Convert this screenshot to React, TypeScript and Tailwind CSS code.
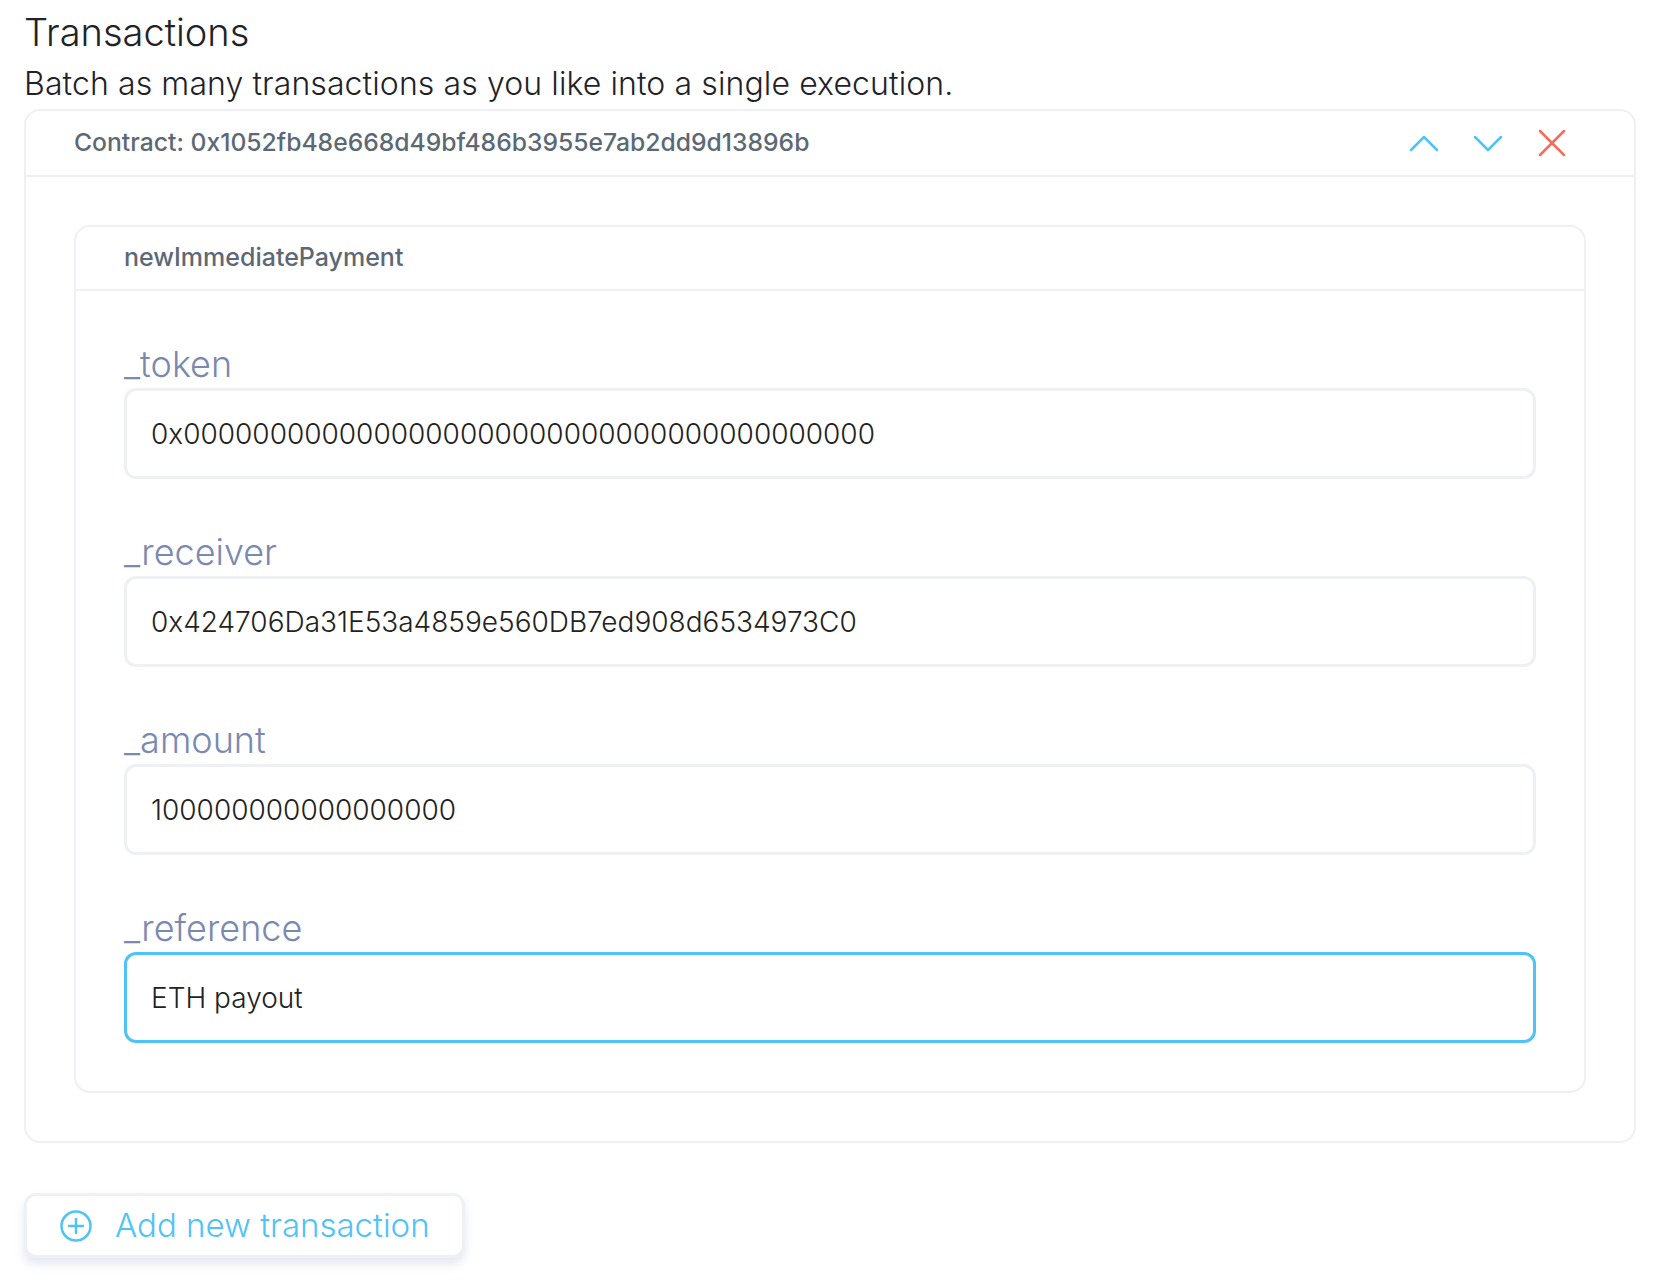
import React, { useState } from 'react';

const fields = [
  { name: '_token', value: '0x0000000000000000000000000000000000000000' },
  { name: '_receiver', value: '0x424706Da31E53a4859e560DB7ed908d6534973C0' },
  { name: '_amount', value: '100000000000000000' },
  { name: '_reference', value: 'ETH payout', focused: true },
];

const ChevronUp = () => (
  <svg width="32" height="32" viewBox="0 0 32 32" fill="none" stroke="#4fc3f7" strokeWidth="2.5" strokeLinecap="round" strokeLinejoin="round">
    <path d="M3 23 L16 10 L29 23" />
  </svg>
);

const ChevronDown = () => (
  <svg width="32" height="32" viewBox="0 0 32 32" fill="none" stroke="#4fc3f7" strokeWidth="2.5" strokeLinecap="round" strokeLinejoin="round">
    <path d="M3 10 L16 23 L29 10" />
  </svg>
);

const Cross = () => (
  <svg width="32" height="32" viewBox="0 0 32 32" fill="none" stroke="#f26d5b" strokeWidth="2.5" strokeLinecap="round">
    <path d="M4 4 L28 28 M28 4 L4 28" />
  </svg>
);

const PlusCircle = () => (
  <svg width="34" height="34" viewBox="0 0 34 34" fill="none" stroke="#4fc3f7" strokeWidth="2.5" strokeLinecap="round">
    <circle cx="17" cy="17" r="14.5" />
    <path d="M17 10 V24 M10 17 H24" />
  </svg>
);

const App = () => {
  const [values, setValues] = useState(fields.map((f) => f.value));

  return (
    <div className="min-h-screen bg-white px-6 pt-[10px]" style={{ fontFamily: 'Inter, "Noto Sans", sans-serif' }}>
      <h1 className="text-[38px] font-light leading-[44px] text-[#1f2328]">Transactions</h1>
      <p className="mt-[10px] text-[32px] font-light leading-[40px] text-[#1f2328] tracking-[0.1px]">
        Batch as many transactions as you like into a single execution.
      </p>

      <div className="mt-[5px] rounded-2xl border-2 border-[#eef0f6] bg-white">
        <div className="flex h-[66px] items-center justify-between border-b-2 border-[#eef0f6] pl-[48px] pr-[66px]">
          <span className="text-[24.7px] font-medium text-[#5d6875]">
            Contract: 0x1052fb48e668d49bf486b3955e7ab2dd9d13896b
          </span>
          <div className="flex items-center gap-[32px]">
            <ChevronUp />
            <ChevronDown />
            <Cross />
          </div>
        </div>

        <div className="p-[48px]">
          <div className="rounded-2xl border-2 border-[#eef0f6]">
            <div className="flex h-[64px] items-center border-b-2 border-[#eef0f6] px-[48px]">
              <span className="text-[25px] font-medium text-[#5d6875]">newImmediatePayment</span>
            </div>
            <div className="flex flex-col gap-[53px] px-[48px] pt-[53px] pb-[48px]">
              {fields.map((f, i) => (
                <div key={f.name} className="flex flex-col gap-[4px]">
                  <label className="text-[36px] font-light leading-[40px] text-[#7b89b0]">{f.name}</label>
                  <input
                    value={values[i]}
                    onChange={(e) => setValues(values.map((v, j) => (j === i ? e.target.value : v)))}
                    className={
                      f.focused
                        ? 'h-[91px] rounded-xl border-[3px] border-[#4fc3f7] px-[24px] text-[28px] font-light text-[#222] outline-none'
                        : 'h-[91px] rounded-xl border-[3px] border-[#eef0f6] px-[24px] text-[28px] font-light text-[#222] outline-none'
                    }
                  />
                </div>
              ))}
            </div>
          </div>
        </div>
      </div>

      <button className="mt-[50px] flex h-[65px] items-center gap-[22px] rounded-xl border-[3px] border-[#eef0f6] bg-white pl-[32px] pr-[32px] shadow-[0_6px_10px_rgba(200,205,225,0.45)]">
        <PlusCircle />
        <span className="text-[33px] font-light text-[#4fc3f7]">Add new transaction</span>
      </button>
    </div>
  );
};

export default App;
